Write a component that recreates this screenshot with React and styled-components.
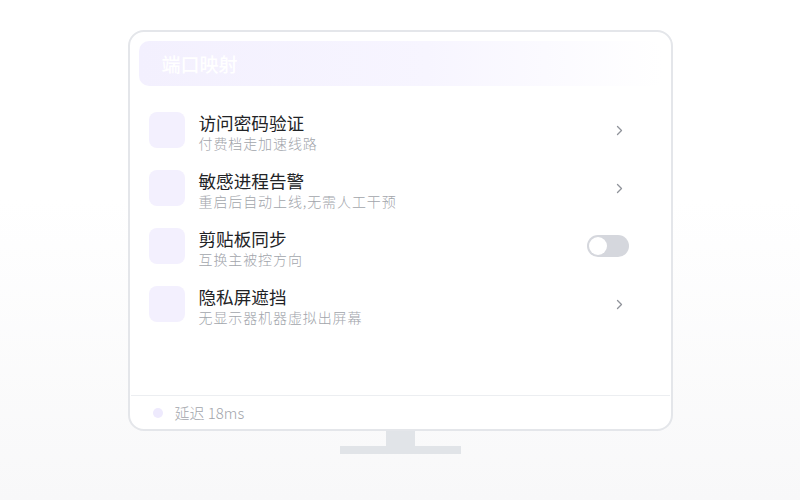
import React from "react";
import styled, { createGlobalStyle } from "styled-components";

const Global = createGlobalStyle`
  html, body { margin: 0; padding: 0; }
  body {
    width: 800px;
    height: 500px;
    overflow: hidden;
    background: linear-gradient(180deg, #ffffff 0%, #ffffff 40%, #f8f8f9 100%);
    font-family: "Noto Sans CJK SC", "Noto Sans", sans-serif;
  }
`;

const Page = styled.div`
  display: flex;
  flex-direction: column;
  align-items: center;
  padding-top: 30px;
`;

const Screen = styled.div`
  width: 545px;
  height: 401px;
  box-sizing: border-box;
  border: 2px solid #e4e6ea;
  border-radius: 16px;
  background: #ffffff;
  padding: 9px 9px 0 9px;
  display: flex;
  flex-direction: column;
`;

const Header = styled.div`
  height: 45px;
  border-radius: 10px;
  background: linear-gradient(90deg, #f3f0fe 0%, #f7f5ff 55%, rgba(255,255,255,0) 100%);
  display: flex;
  align-items: center;
  padding-left: 23px;
  color: #ffffff;
  font-size: 19px;
  font-weight: 500;
`;

const List = styled.div`
  display: flex;
  flex-direction: column;
  gap: 22px;
  padding: 26px 33px 0 10px;
  flex: 1;
`;

const Row = styled.div`
  display: flex;
  align-items: center;
  height: 36px;
`;

const IconBox = styled.div`
  width: 36px;
  height: 36px;
  border-radius: 8px;
  background: #f3f0fe;
  flex-shrink: 0;
`;

const Texts = styled.div`
  flex: 1;
  margin-left: 14px;
  padding-top: 5px;
  display: flex;
  flex-direction: column;
`;

const Title = styled.div`
  font-size: 17.6px;
  line-height: 22px;
  color: #222326;
  font-weight: 400;
`;

const Sub = styled.div`
  font-size: 14px;
  line-height: 19px;
  color: #a2a5ab;
  letter-spacing: 0.9px;
  font-weight: 300;
`;

const Control = styled.div`
  width: 42px;
  display: flex;
  justify-content: flex-end;
  align-items: center;
`;

const Chevron = styled.svg`
  width: 7px;
  height: 11px;
  margin-right: 6px;
`;

const Toggle = styled.div`
  width: 42px;
  height: 22px;
  border-radius: 11px;
  background: #d5d7dd;
  position: relative;
`;

const Knob = styled.div`
  position: absolute;
  left: 2px;
  top: 2px;
  width: 18px;
  height: 18px;
  border-radius: 50%;
  background: #ffffff;
`;

const Footer = styled.div`
  height: 33px;
  border-top: 1px solid #eceef1;
  margin: 0 -8px;
  display: flex;
  align-items: center;
  padding-left: 22px;
  gap: 12px;
  color: #a2a5ab;
  font-size: 15px;
  font-weight: 300;
`;

const Dot = styled.div`
  width: 10px;
  height: 10px;
  border-radius: 50%;
  background: #eeeafd;
`;

const Neck = styled.div`
  width: 29px;
  height: 15px;
  background: #e1e4e8;
`;

const Base = styled.div`
  width: 121px;
  height: 8px;
  background: #e1e4e8;
`;

const items = [
  { title: "访问密码验证", sub: "付费档走加速线路", ctl: "chevron" },
  { title: "敏感进程告警", sub: "重启后自动上线,无需人工干预", ctl: "chevron" },
  { title: "剪贴板同步", sub: "互换主被控方向", ctl: "toggle" },
  { title: "隐私屏遮挡", sub: "无显示器机器虚拟出屏幕", ctl: "chevron" },
];

export default function App() {
  return (
    <>
      <Global />
      <Page>
        <Screen>
          <Header>端口映射</Header>
          <List>
            {items.map((it) => (
              <Row key={it.title}>
                <IconBox />
                <Texts>
                  <Title>{it.title}</Title>
                  <Sub>{it.sub}</Sub>
                </Texts>
                <Control>
                  {it.ctl === "toggle" ? (
                    <Toggle>
                      <Knob />
                    </Toggle>
                  ) : (
                    <Chevron viewBox="0 0 7 11">
                      <path d="M1.5 1.5 L5.5 5.5 L1.5 9.5" fill="none" stroke="#8f939a" strokeWidth="1.3" strokeLinecap="round" strokeLinejoin="round" />
                    </Chevron>
                  )}
                </Control>
              </Row>
            ))}
          </List>
          <Footer>
            <Dot />
            <span>延迟 18ms</span>
          </Footer>
        </Screen>
        <Neck />
        <Base />
      </Page>
    </>
  );
}
